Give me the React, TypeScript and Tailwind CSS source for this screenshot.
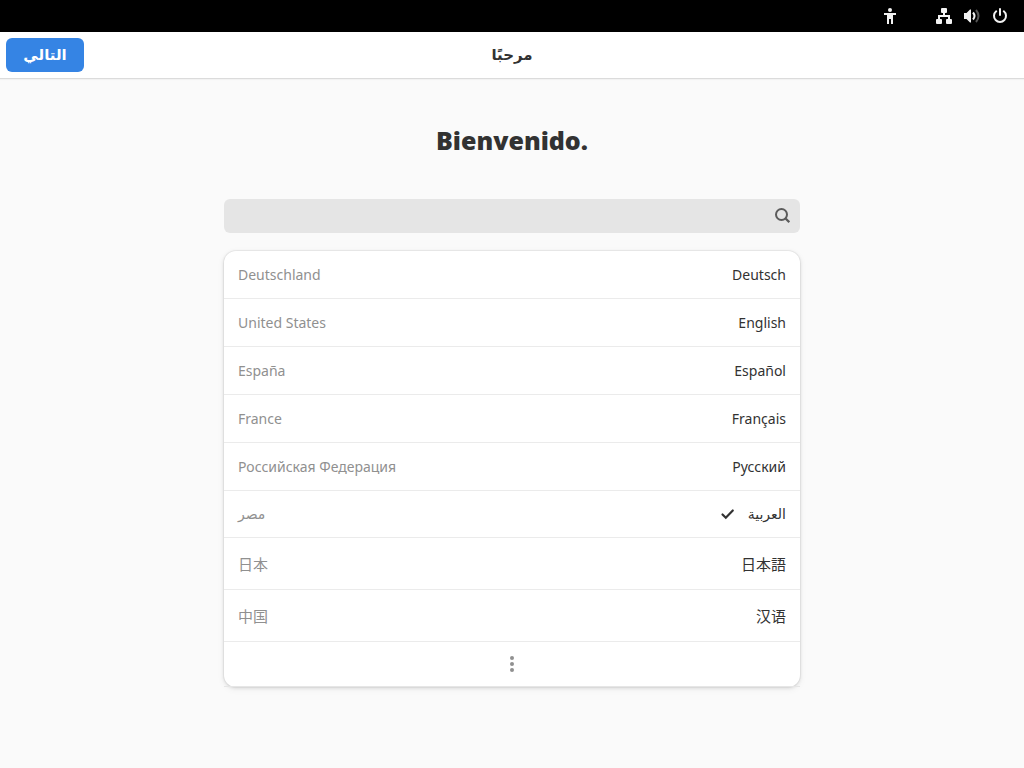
import React, { useState } from "react";

type Language = {
  name: string;
  country: string;
  lang: string;
  row: string;
};

const latin = "h-12";
const cjk = "h-[52px] font-['Noto_Sans_CJK_SC',sans-serif] text-[15px]";

const languages: Language[] = [
  { name: "Deutsch", country: "Deutschland", lang: "de", row: latin },
  { name: "English", country: "United States", lang: "en", row: latin },
  { name: "Español", country: "España", lang: "es", row: latin },
  { name: "Français", country: "France", lang: "fr", row: latin },
  { name: "Русский", country: "Российская Федерация", lang: "ru", row: latin },
  { name: "العربية", country: "مصر", lang: "ar", row: "h-[47px] font-['DejaVu_Sans',sans-serif]" },
  { name: "日本語", country: "日本", lang: "ja", row: cjk },
  { name: "汉语", country: "中国", lang: "zh", row: cjk },
];

function AccessibilityIcon() {
  return (
    <svg viewBox="0 0 16 16" className="size-4" fill="currentColor" aria-hidden="true">
      <circle cx="8" cy="2" r="2" />
      <path d="M2 5h12v2h-3v9H9v-5H7v5H5V7H2z" />
    </svg>
  );
}

function NetworkIcon() {
  return (
    <svg viewBox="0 0 16 16" className="size-4" fill="currentColor" aria-hidden="true">
      <rect x="5" y="0" width="6" height="5" rx="1" />
      <path d="M7 4h2v3h5v4h-2V9H4v2H2V7h5z" />
      <rect x="0" y="11" width="6" height="5" rx="1" />
      <rect x="10" y="11" width="6" height="5" rx="1" />
    </svg>
  );
}

function VolumeIcon() {
  return (
    <svg viewBox="0 0 16 16" className="size-4" fill="currentColor" aria-hidden="true">
      <path d="M0 5h2.500L6 1.500h1v13H6L2.500 11H0z" />
      <path d="M9 4.500q3 3.500 0 7" fill="none" stroke="currentColor" strokeWidth="2" />
      <path d="M12 2q5 6 0 12" fill="none" stroke="currentColor" strokeWidth="2" opacity="0.35" />
    </svg>
  );
}

function PowerIcon() {
  return (
    <svg viewBox="0 0 16 16" className="size-4" fill="none" stroke="currentColor" strokeWidth="2" strokeLinecap="round" aria-hidden="true">
      <path d="M8 1v6M4.200 3.300a6 6 0 1 0 7.600 0" />
    </svg>
  );
}

function SearchIcon() {
  return (
    <svg viewBox="0 0 16 16" className="size-4" fill="none" stroke="currentColor" strokeWidth="2" aria-hidden="true">
      <circle cx="7.500" cy="6.500" r="5.500" />
      <path d="M11.300 10.300l4 4" strokeWidth="2.300" />
    </svg>
  );
}

function CheckIcon() {
  return (
    <svg viewBox="0 0 16 16" className="size-4" fill="none" stroke="currentColor" strokeWidth="2.200" strokeLinecap="round" aria-hidden="true">
      <path d="M2.500 8.500l3.300 3.300 7-7.300" />
    </svg>
  );
}

function MoreIcon() {
  return (
    <svg viewBox="0 0 16 16" className="size-4" fill="currentColor" aria-hidden="true">
      <circle cx="8" cy="2" r="2" />
      <circle cx="8" cy="8" r="2" />
      <circle cx="8" cy="14" r="2" />
    </svg>
  );
}

export default function App() {
  const [selected, setSelected] = useState("ar");
  const [query, setQuery] = useState("");
  const shown = languages.filter((l) =>
    (l.name + " " + l.country).toLowerCase().includes(query.toLowerCase()),
  );

  return (
    <div dir="rtl" className="flex min-h-screen flex-col bg-[#fafafa] font-['Noto_Sans',sans-serif] text-sm text-[#323232]">
      <div dir="ltr" className="flex h-8 items-center justify-end gap-3 bg-black px-4 text-[#f2f2f2]">
        <button type="button" aria-label="Accessibility" className="me-[26px]">
          <AccessibilityIcon />
        </button>
        <button type="button" aria-label="System" className="flex gap-3">
          <NetworkIcon />
          <VolumeIcon />
          <PowerIcon />
        </button>
      </div>

      <header className="grid h-[47px] grid-cols-3 items-center border-b border-[#dbdbdb] bg-white px-1.5 font-['DejaVu_Sans',sans-serif] text-[15px] font-bold shadow-[0_1px_1px_rgba(0,0,0,0.03)]">
        <span />
        <h1 className="pt-0.5 text-center">مرحبًا</h1>
        <button type="button" className="h-[34px] w-[78px] justify-self-end rounded-md bg-[#3584e4] pt-0.5 text-white">
          التالي
        </button>
      </header>

      <main className="mx-auto flex w-full max-w-xl flex-col pt-[43px]">
        <h2 dir="ltr" className="text-center font-['Open_Sans',sans-serif] text-[25px] leading-9 font-extrabold">
          Bienvenido.
        </h2>

        <div className="mt-[41px] flex h-[34px] items-center rounded-md bg-[#e5e5e5] px-2.5 text-[#5b5b5b]">
          <SearchIcon />
          <input
            type="text"
            aria-label="بحث"
            value={query}
            onChange={(e) => setQuery(e.target.value)}
            className="min-w-0 flex-1 bg-transparent px-2 outline-none"
          />
        </div>

        <ul className="mt-[18px] rounded-xl bg-white shadow-[0_0_0_1px_rgba(0,0,0,0.04),0_1px_3px_1px_rgba(0,0,0,0.08),0_2px_6px_2px_rgba(0,0,0,0.03)]">
          {shown.map((l) => (
            <li key={l.lang} lang={l.lang}>
              <button
                type="button"
                aria-pressed={selected === l.lang}
                onClick={() => setSelected(l.lang)}
                className={`flex w-full items-center border-b border-[#ebebeb] px-3.5 ${l.row}`}
              >
                <span>{l.name}</span>
                {selected === l.lang && (
                  <span className="ms-3">
                    <CheckIcon />
                  </span>
                )}
                <span className="ms-auto text-[#909090]">{l.country}</span>
              </button>
            </li>
          ))}
          <li>
            <button type="button" aria-label="المزيد" className="flex h-[45px] w-full items-center justify-center border-b border-[#e6e6e6] text-[#909090]">
              <MoreIcon />
            </button>
          </li>
        </ul>
      </main>
    </div>
  );
}
